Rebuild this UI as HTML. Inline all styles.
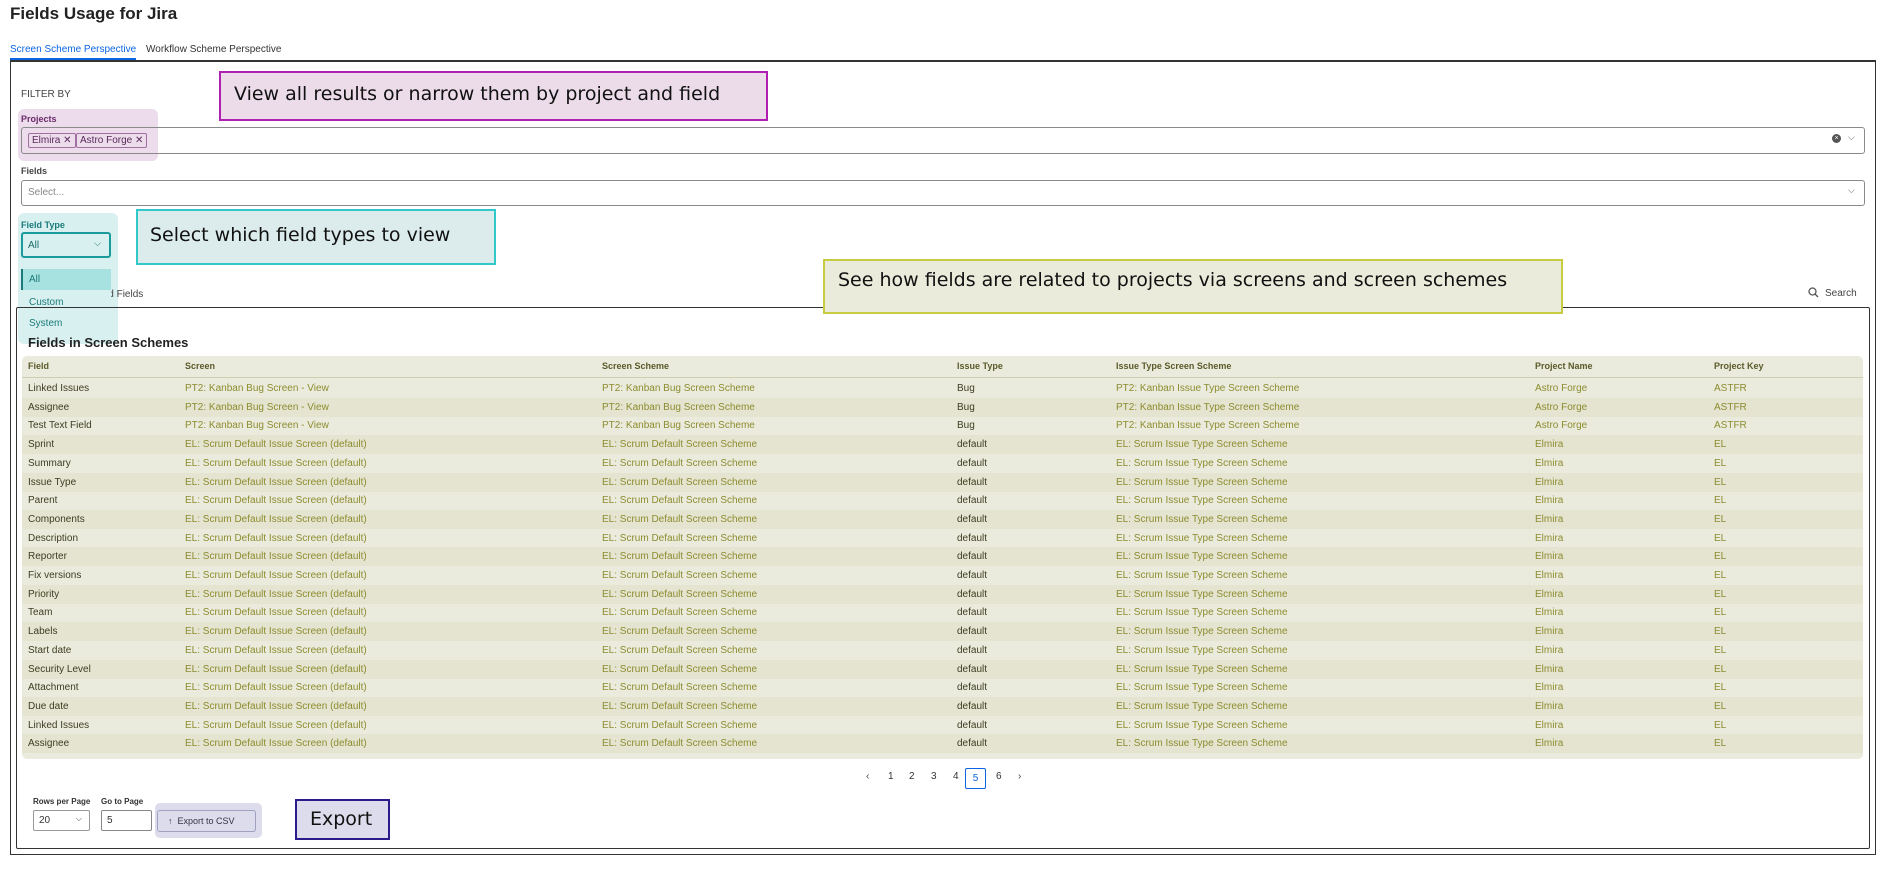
<!DOCTYPE html>
<html><head><meta charset="utf-8"><style>
*{box-sizing:border-box;margin:0;padding:0}
body{width:1892px;height:876px;background:#fff;font-family:"Liberation Sans",sans-serif;position:relative;overflow:hidden;color:#172b4d}
.a{position:absolute;white-space:nowrap}
.row{position:absolute;left:22px;width:1841px;height:19px;font-size:10px;line-height:19px}
.row span{position:absolute}
.c0{left:6px;color:#3d3d22}.c1{left:163px;color:#8c8c30}.c2{left:580px;color:#8c8c30}.c3{left:935px;color:#3d3d22}.c4{left:1094px;color:#8c8c30}.c5{left:1513px;color:#8c8c30}.c6{left:1692px;color:#8c8c30}
.hd span{color:#5a5a2a;font-weight:bold;font-size:9px}
.ann{font-size:19px;font-family:'DejaVu Sans',sans-serif;color:#111}
</style></head><body>
<div class="a" style="left:10px;top:4px;font-size:17px;font-weight:bold;color:#222">Fields Usage for Jira</div>
<div class="a" style="left:10px;top:44px;font-size:10px;color:#0c66e4;border-bottom:2px solid #0c66e4;padding-bottom:3px">Screen Scheme Perspective</div>
<div class="a" style="left:146px;top:44px;font-size:10px;color:#333">Workflow Scheme Perspective</div>
<div class="a" style="left:10px;top:60px;width:1866px;height:795px;border:1px solid #333;border-top:2px solid #333"></div>
<div class="a" style="left:21px;top:89px;font-size:10px;color:#444">FILTER BY</div>
<div class="a" style="left:18px;top:109px;width:140px;height:52px;background:#ecdcec;border-radius:6px"></div>
<div class="a" style="left:21px;top:114px;font-size:9px;font-weight:bold;color:#6a2a6a">Projects</div>
<div class="a" style="left:21px;top:127px;width:1844px;height:27px;border:1px solid #8a8a8a;border-radius:3px"></div>
<div class="a" style="left:28px;top:133px;height:15px;border:1px solid #a070a0;border-radius:2px;font-size:10px;line-height:13px;padding:0 3px;color:#5a2a5a">Elmira ✕</div>
<div class="a" style="left:76px;top:133px;height:15px;border:1px solid #a070a0;border-radius:2px;font-size:10px;line-height:13px;padding:0 3px;color:#5a2a5a">Astro Forge ✕</div>
<div class="a" style="left:1832px;top:134px;width:9px;height:9px;border-radius:50%;background:#555;color:#fff;font-size:7px;line-height:9px;text-align:center">×</div>
<div class="a" style="left:1848px;top:132px;font-size:9px;color:#555">⌵</div>
<div class="a" style="left:21px;top:166px;font-size:9px;font-weight:bold;color:#444">Fields</div>
<div class="a" style="left:21px;top:180px;width:1844px;height:26px;border:1px solid #8a8a8a;border-radius:3px;font-size:10px;color:#888;padding:6px 6px">Select...</div>
<div class="a" style="left:1848px;top:185px;font-size:9px;color:#555">⌵</div>
<div class="a" style="left:219px;top:71px;width:549px;height:50px;background:#ecdcea;border:2px solid #b020b0"></div>
<div class="a ann" style="left:234px;top:83px">View all results or narrow them by project and field</div>
<div class="a" style="left:18px;top:213px;width:100px;height:131px;background:#d8f0f0;border-radius:6px"></div>
<div class="a" style="left:21px;top:220px;font-size:9px;font-weight:bold;color:#1a7a7a">Field Type</div>
<div class="a" style="left:21px;top:232px;width:90px;height:26px;border:2px solid #1a9a9a;border-radius:3px;font-size:10px;color:#1a6a6a;padding:6px 5px">All<span style="position:absolute;right:8px;top:4px;font-size:9px">⌵</span></div>
<div class="a" style="left:76px;top:289px;font-size:10px;color:#444">ects and Fields</div>
<div class="a" style="left:21px;top:264px;width:90px;height:79px;background:#d8f0f0;border-radius:4px"></div>
<div class="a" style="left:21px;top:269px;width:90px;height:21px;background:#a8e2e0;border-left:2px solid #1a7a7a;font-size:10px;color:#1a7a7a;padding:5px 6px">All</div>
<div class="a" style="left:29px;top:297px;font-size:10px;color:#1a7a7a">Custom</div>
<div class="a" style="left:29px;top:318px;font-size:10px;color:#1a7a7a">System</div>
<div class="a" style="left:136px;top:209px;width:360px;height:56px;background:#dcecec;border:2px solid #30c8c8"></div>
<div class="a ann" style="left:150px;top:224px">Select which field types to view</div>
<div class="a" style="left:16px;top:307px;width:1854px;height:542px;border:1px solid #333;border-radius:2px"></div>
<div class="a" style="left:823px;top:259px;width:740px;height:55px;background:#ebebdc;border:2px solid #c8cc40"></div>
<div class="a ann" style="left:838px;top:269px">See how fields are related to projects via screens and screen schemes</div>
<svg class="a" style="left:1808px;top:287px" width="11" height="11" viewBox="0 0 11 11"><circle cx="4.5" cy="4.5" r="3.5" fill="none" stroke="#555" stroke-width="1.3"/><path d="M7 7l3 3" stroke="#555" stroke-width="1.3"/></svg>
<div class="a" style="left:1825px;top:288px;font-size:10px;color:#444">Search</div>
<div class="a" style="left:28px;top:335px;font-size:13px;font-weight:bold;color:#222">Fields in Screen Schemes</div>
<div class="a" style="left:22px;top:356px;width:1841px;height:403px;background:#ebebdd;border-radius:5px"></div>
<div class="row hd" style="top:357px;border-bottom:1px solid #cfcfb0;height:21px"><span class="c0">Field</span><span class="c1">Screen</span><span class="c2">Screen Scheme</span><span class="c3">Issue Type</span><span class="c4">Issue Type Screen Scheme</span><span class="c5">Project Name</span><span class="c6">Project Key</span></div>
<div id="rows"></div>
<div class="a" style="left:866px;top:771px;font-size:10px;color:#444">‹</div>
<div class="a" style="left:888px;top:771px;font-size:10px;color:#333">1</div>
<div class="a" style="left:909px;top:771px;font-size:10px;color:#333">2</div>
<div class="a" style="left:931px;top:771px;font-size:10px;color:#333">3</div>
<div class="a" style="left:953px;top:771px;font-size:10px;color:#333">4</div>
<div class="a" style="left:965px;top:768px;width:21px;height:21px;border:1px solid #0c66e4;border-radius:2px;font-size:10px;color:#0c66e4;text-align:center;line-height:19px">5</div>
<div class="a" style="left:996px;top:771px;font-size:10px;color:#333">6</div>
<div class="a" style="left:1018px;top:771px;font-size:10px;color:#444">›</div>
<div class="a" style="left:33px;top:797px;font-size:8px;font-weight:bold;color:#333">Rows per Page</div>
<div class="a" style="left:101px;top:797px;font-size:8px;font-weight:bold;color:#333">Go to Page</div>
<div class="a" style="left:33px;top:810px;width:57px;height:21px;border:1px solid #999;border-radius:2px;font-size:10px;padding:4px 5px;color:#333">20<span style="position:absolute;right:7px;top:3px;font-size:8px">⌵</span></div>
<div class="a" style="left:101px;top:810px;width:51px;height:21px;border:1px solid #888;border-radius:2px;font-size:10px;padding:4px 5px;color:#333">5</div>
<div class="a" style="left:155px;top:803px;width:107px;height:35px;background:#dcdcec;border-radius:5px"></div>
<div class="a" style="left:157px;top:810px;width:99px;height:22px;border:1px solid #a0a0c0;border-radius:3px;font-size:9px;color:#334;padding:5px 0 0 10px">↑ &nbsp;Export to CSV</div>
<div class="a" style="left:295px;top:799px;width:95px;height:41px;background:#dcdcec;border:2px solid #2a1a8a"></div>
<div class="a ann" style="left:310px;top:808px">Export</div>
<script>
var f=["Sprint","Summary","Issue Type","Parent","Components","Description","Reporter","Fix versions","Priority","Team","Labels","Start date","Security Level","Attachment","Due date","Linked Issues","Assignee"];
var h="";
for(var i=0;i<20;i++){var r;if(i<3)r=[i==0?"Linked Issues":i==1?"Assignee":"Test Text Field","PT2: Kanban Bug Screen - View","PT2: Kanban Bug Screen Scheme","Bug","PT2: Kanban Issue Type Screen Scheme","Astro Forge","ASTFR"];else r=[f[i-3],"EL: Scrum Default Issue Screen (default)","EL: Scrum Default Screen Scheme","default","EL: Scrum Issue Type Screen Scheme","Elmira","EL"];
h+='<div class="row" style="top:'+(379+i*18.7)+'px;'+(i%2?'background:#e4e4d0':'')+'">';for(var j=0;j<7;j++)h+='<span class="c'+j+'">'+r[j]+'</span>';h+='</div>';}
document.getElementById("rows").outerHTML=h;
</script>
</body></html>
